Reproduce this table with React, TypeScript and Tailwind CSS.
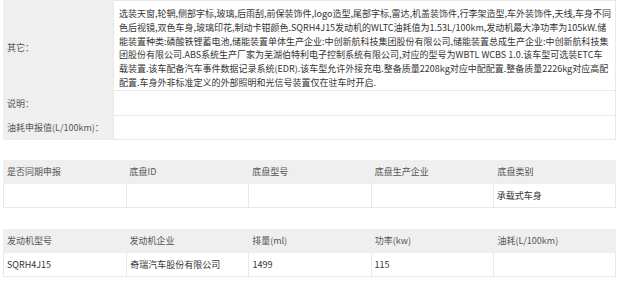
const font = { fontFamily: '"Noto Sans CJK SC", "Noto Sans", sans-serif' }

const otherLines = [
  '选装天窗,轮辋,侧部字标,玻璃,后雨刮,前保装饰件,logo造型,尾部字标,雷达,机盖装饰件,行李架造型,车外装饰件,天线,车身不同',
  '色后视镜,双色车身,玻璃印花,制动卡钳颜色.SQRH4J15发动机的WLTC油耗值为1.53L/100km,发动机最大净功率为105kW.储',
  '能装置种类:磷酸铁锂蓄电池,储能装置单体生产企业:中创新航科技集团股份有限公司,储能装置总成生产企业:中创新航科技集',
  '团股份有限公司.ABS系统生产厂家为芜湖伯特利电子控制系统有限公司,对应的型号为WBTL WCBS 1.0.该车型可选装ETC车',
  '载装置.该车配备汽车事件数据记录系统(EDR).该车型允许外接充电.整备质量2208kg对应中配配置.整备质量2226kg对应高配',
  '配置.车身外非标准定义的外部照明和光信号装置仅在驻车时开启.',
]

function GridTable({ head, row }: { head: string[]; row: string[] }) {
  return (
    <div className="w-[613px]">
      <div className="grid h-[24px] grid-cols-5 items-center bg-[#efefef]">
        {head.map((h, i) => (
          <div key={i} className="pl-[4px] text-[#555]">
            {h}
          </div>
        ))}
      </div>
      <div className="grid h-[24px] grid-cols-5 border-x border-b border-[#e8e8e8]">
        {row.map((c, i) => (
          <div key={i} className={`flex items-center pl-[3px] ${i > 0 ? 'border-l border-[#e8e8e8]' : ''}`}>
            {c}
          </div>
        ))}
      </div>
    </div>
  )
}

export default function App() {
  return (
    <div className="h-[282px] w-[620px] overflow-hidden bg-white pl-[3px] text-[9px] text-[#333]" style={font}>
      <div className="w-[613px]">
        <div className="flex h-[91px]">
          <div className="flex w-[110px] items-center bg-[#efefef] pl-[4px] pt-[4px] text-[#555]">其它：</div>
          <div className="flex-1 whitespace-nowrap border border-[#e8e8e8] bg-white pl-[5px] pt-[6px] leading-[13.8px]">
            {otherLines.map((l, i) => (
              <div key={i}>{l}</div>
            ))}
          </div>
        </div>
        <div className="flex h-[25px]">
          <div className="flex w-[110px] items-center bg-[#efefef] pl-[4px] text-[#555]">说明：</div>
          <div className="flex-1 border-x border-b border-[#e8e8e8]" />
        </div>
        <div className="flex h-[24px]">
          <div className="flex w-[110px] items-center bg-[#efefef] pl-[4px] text-[#555]">油耗申报值(L/100km)：</div>
          <div className="flex-1 border-x border-b border-[#e8e8e8]" />
        </div>
      </div>
      <div className="h-[20px]" />
      <GridTable
        head={['是否同期申报', '底盘ID', '底盘型号', '底盘生产企业', '底盘类别']}
        row={['', '', '', '', '承载式车身']}
      />
      <div className="h-[21px]" />
      <GridTable
        head={['发动机型号', '发动机企业', '排量(ml)', '功率(kw)', '油耗(L/100km)']}
        row={['SQRH4J15', '奇瑞汽车股份有限公司', '1499', '115', '']}
      />
    </div>
  )
}
